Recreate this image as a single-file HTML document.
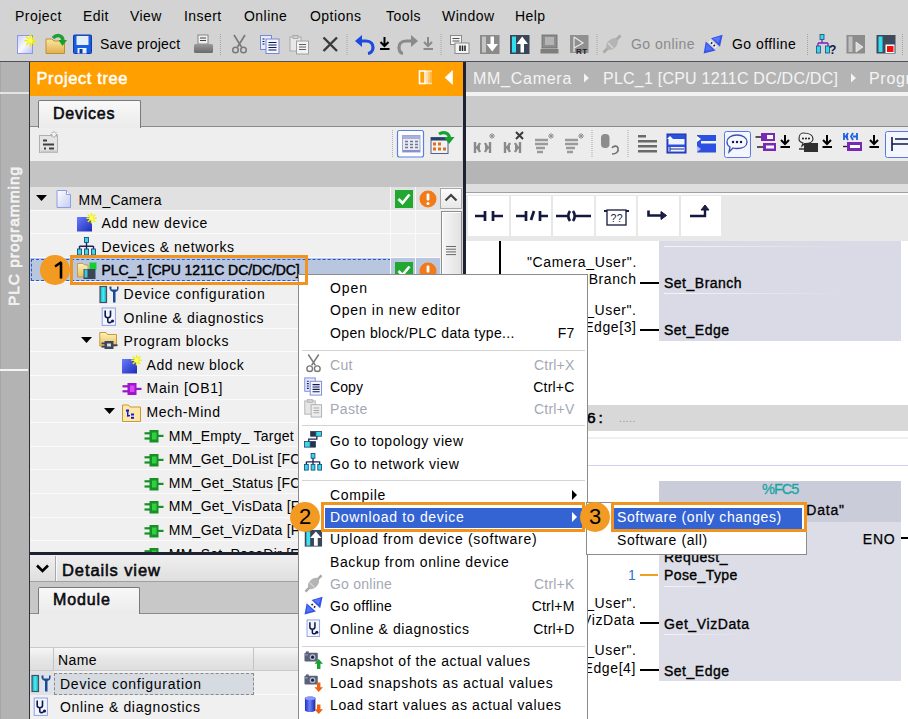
<!DOCTYPE html>
<html><head><meta charset="utf-8">
<style>
*{margin:0;padding:0;box-sizing:border-box}
html,body{width:908px;height:719px;overflow:hidden}
body{position:relative;background:#d3d3d3;font-family:"Liberation Sans",sans-serif;font-size:14px;color:#000;letter-spacing:0.45px}
.a{position:absolute}
.t{position:absolute;white-space:nowrap;line-height:1}
</style></head><body>
<svg width="0" height="0" style="position:absolute">
<defs>
<linearGradient id="gdoc" x1="0" y1="0" x2="1" y2="1"><stop offset="0" stop-color="#ffffff"/><stop offset="1" stop-color="#c4ccf2"/></linearGradient>
<linearGradient id="gblue" x1="0" y1="0" x2="1" y2="1"><stop offset="0" stop-color="#6a7cff"/><stop offset="1" stop-color="#1b2bb8"/></linearGradient>
<linearGradient id="gfold" x1="0" y1="0" x2="0" y2="1"><stop offset="0" stop-color="#fff2b8"/><stop offset="1" stop-color="#e8c060"/></linearGradient>
<linearGradient id="gteal" x1="0" y1="0" x2="1" y2="0"><stop offset="0" stop-color="#20a8b8"/><stop offset="0.5" stop-color="#40f0f8"/><stop offset="1" stop-color="#20a8b8"/></linearGradient>
<symbol id="i-doc" viewBox="0 0 20 20"><path d="M3 1.5H12.5L16.5 5.5V18.5H3Z" fill="url(#gdoc)" stroke="#8e9ce0"/><path d="M12.5 1.5V5.5H16.5" fill="#fff" stroke="#8e9ce0"/></symbol>
<symbol id="i-addnew" viewBox="0 0 20 20"><rect x="0" y="4" width="15" height="14.5" fill="url(#gblue)"/><path d="M14.5 0V10.4M9.3 5.2H19.7M10.8 1.5L18.2 8.9M10.8 8.9L18.2 1.5" stroke="#eef000" stroke-width="1.4"/><circle cx="14.5" cy="5.2" r="2.2" fill="#ffff60"/></symbol>
<symbol id="i-net" viewBox="0 0 20 20"><path d="M9.5 5V9.3M2.5 9.3H16.5M2.5 9V12M9.5 9V12M16.5 9V12" stroke="#20245a" stroke-width="1.4" fill="none"/><g fill="#38d8e8" stroke="#1c4c7c" stroke-width="0.9"><rect x="7.5" y="0.5" width="4" height="5"/><rect x="0.5" y="12" width="4" height="6"/><rect x="7.5" y="12" width="4" height="6"/><rect x="14.5" y="12" width="4" height="6"/></g></symbol>
<symbol id="i-plc" viewBox="0 0 20 20"><path d="M0.5 3.5H6L7.5 5H11V17H0.5Z" fill="url(#gfold)" stroke="#c09030" stroke-width="0.8"/><rect x="12.5" y="2.5" width="7" height="7" fill="#10d030"/><rect x="6.5" y="9" width="12" height="10" fill="#3a4658"/><rect x="7.5" y="9.5" width="3" height="8" fill="#38c8d8"/></symbol>
<symbol id="i-devcfg" viewBox="0 0 20 20"><rect x="1" y="2.5" width="6.5" height="16" fill="url(#gteal)" stroke="#4a5060" stroke-width="1.2"/><path d="M10.5 2.5C10 5.5 11.5 7.5 14 8V18.5H16.5V8C19 7.5 20 5.5 19.5 2.5L18 2.5V5.5H12.5V2.5Z" fill="#1a4a98"/></symbol>
<symbol id="i-diag" viewBox="0 0 20 20"><rect x="3.2" y="1" width="13.2" height="17.4" fill="#f4f6ff" stroke="#8ea0e8" stroke-width="1"/><path d="M6.2 3.5V8.5C6.2 11.5 11.5 11.5 11.5 8.5V3.5M8.8 11V14.2C8.8 16 11 16 12.5 14.8" stroke="#101848" stroke-width="1.6" fill="none"/><circle cx="13.5" cy="14" r="1.6" fill="#101848"/></symbol>
<symbol id="i-progfolder" viewBox="0 0 20 20"><path d="M0.8 1.5H7L8.5 3.5H17.5V15H0.8Z" fill="url(#gfold)" stroke="#c09030" stroke-width="0.9"/><g fill="#3c4656"><rect x="5.5" y="10" width="9" height="8"/><rect x="2.5" y="11.5" width="3.5" height="1.8"/><rect x="2.5" y="14.8" width="3.5" height="1.8"/><rect x="14" y="13.3" width="4.5" height="1.8"/></g><rect x="8" y="12.5" width="4" height="3" fill="#d8dce8"/></symbol>
<symbol id="i-ob" viewBox="0 0 20 20"><g fill="#9a18c8"><rect x="5.5" y="5" width="9" height="12"/><rect x="0.5" y="7.2" width="5.5" height="2.2"/><rect x="0.5" y="12.2" width="5.5" height="2.2"/><rect x="14" y="9.8" width="5.5" height="2.2"/></g><rect x="8" y="7.5" width="4.5" height="6.5" fill="#e040ff"/></symbol>
<symbol id="i-fc" viewBox="0 0 20 20"><g fill="#189028"><rect x="5.5" y="5" width="9" height="12.5"/><rect x="0.5" y="7.2" width="5.5" height="2.2"/><rect x="0.5" y="12.4" width="5.5" height="2.2"/><rect x="14" y="9.8" width="5.5" height="2.2"/></g><rect x="8" y="7.5" width="4.5" height="7" fill="#30d040"/></symbol>
<symbol id="i-mmfolder" viewBox="0 0 20 20"><path d="M0.5 3H6.5L8 5H18.5V19.5H0.5Z" fill="#fde8a8" stroke="#c89838" stroke-width="1"/><g fill="#1018e0"><rect x="4" y="7.5" width="3" height="2.2"/><rect x="5" y="9.5" width="1.4" height="5"/><rect x="5" y="13" width="3" height="1.4"/><rect x="9" y="11.5" width="3" height="2"/><rect x="9" y="14.8" width="3" height="2"/></g></symbol>
</defs></svg>
<svg width="0" height="0" style="position:absolute">
<defs>
<linearGradient id="gcyl" x1="0" y1="0" x2="1" y2="0"><stop offset="0" stop-color="#2030c0"/><stop offset="0.45" stop-color="#6a80ff"/><stop offset="1" stop-color="#1a28a0"/></linearGradient>
<symbol id="m-cut" viewBox="0 0 20 20"><path d="M4.5 0.5L12 12M15.5 0.5L8 12" stroke="#7a7a7a" stroke-width="1.6" fill="none"/><circle cx="6" cy="15.5" r="3" fill="none" stroke="#7a7a7a" stroke-width="1.5"/><circle cx="14" cy="15.5" r="3" fill="none" stroke="#7a7a7a" stroke-width="1.5"/></symbol>
<symbol id="m-copy" viewBox="0 0 20 20"><rect x="0.8" y="1" width="11" height="14" fill="#e8ecff" stroke="#7888d8"/><rect x="6.5" y="4.5" width="12" height="14.5" fill="#f4f6ff" stroke="#7888d8"/><g stroke="#101850" stroke-width="1.2"><path d="M3 4.5H5M3 7H5M3 9.5H5M3 12H5M9 8H16.5M9 10.5H16.5M9 13H16.5M9 15.5H16.5"/></g></symbol>
<symbol id="m-paste" viewBox="0 0 20 20"><rect x="0.8" y="2" width="11" height="14" fill="#e6e6e6" stroke="#b4b4b4"/><rect x="3.5" y="0.5" width="5.5" height="3" fill="#d0d0d0" stroke="#b4b4b4" stroke-width="0.8"/><rect x="7.5" y="6" width="11" height="13" fill="#ececec" stroke="#b0b0b0"/><g stroke="#a8a8a8" stroke-width="1.1"><path d="M10 9.5H16M10 12H16M10 14.5H16"/></g></symbol>
<symbol id="m-topo" viewBox="0 0 20 20"><path d="M7 3.5H13.5V8.5H5V14H7" stroke="#20245a" stroke-width="1.4" fill="none"/><g stroke="#1c3c5c" stroke-width="0.8"><rect x="7" y="0.5" width="5" height="5" fill="#2a3448"/><rect x="12.5" y="0.5" width="6" height="5" fill="#38d8e8"/><rect x="0.5" y="11" width="6" height="6" fill="#38d8e8"/><rect x="7" y="11" width="5" height="6" fill="#2a3448"/></g></symbol>
<symbol id="m-upload" viewBox="0 0 20 20"><rect x="0.8" y="1" width="18.2" height="17.5" fill="#3a4658"/><rect x="2.5" y="2.5" width="4" height="15" fill="#40e0f0"/><path d="M12.5 2.5L18.5 9.5H14.5V17.5H10.5V9.5H6.5Z" fill="#fff"/></symbol>
<symbol id="m-goonline" viewBox="0 0 20 20"><path d="M1.5 18.5L18.5 1.5" stroke="#a8a8a8" stroke-width="2.6"/><ellipse cx="10" cy="10" rx="7" ry="4.6" transform="rotate(-45 10 10)" fill="#b4b4b4"/><path d="M6 9L11 14" stroke="#d8d8d8" stroke-width="1.2"/></symbol>
<symbol id="m-gooffline" viewBox="0 0 20 20"><path d="M8 4.2L19.6 0.8L17 12.8Z" fill="#3454e8"/><path d="M10 4.5L17.5 2.5L15.5 9Z" fill="#6a84ff" opacity="0.7"/><path d="M2.8 7.6L12.6 16.4L0.6 19.4Z" fill="#3454e8"/><path d="M3.5 10L9.5 15.5L2.5 17Z" fill="#6a84ff" opacity="0.6"/><path d="M6.6 7.2L13 13.2" stroke="#f4f4f4" stroke-width="2.6"/><path d="M8 8.5L9.2 9.6M10.6 11L11.8 12.1" stroke="#1a1e48" stroke-width="1.8"/></symbol>
<symbol id="m-snap" viewBox="0 0 20 20"><rect x="0.5" y="3" width="14" height="9" rx="1" fill="#5a6278"/><rect x="2" y="1.5" width="3" height="2" fill="#5a6278"/><rect x="1" y="4.5" width="3" height="1.2" fill="#9aa0b8"/><circle cx="9" cy="7.5" r="3" fill="#b8bcd0"/><circle cx="9" cy="7.5" r="1.6" fill="#1a1e40"/><path d="M15.5 9.5L20 14.5H17.3V20H13.7V14.5H11Z" fill="#18a030"/></symbol>
<symbol id="m-loadsnap" viewBox="0 0 20 20"><rect x="0.5" y="3" width="14" height="9" rx="1" fill="#5a6278"/><rect x="2" y="1.5" width="3" height="2" fill="#5a6278"/><rect x="1" y="4.5" width="3" height="1.2" fill="#9aa0b8"/><circle cx="9" cy="7.5" r="3" fill="#b8bcd0"/><circle cx="9" cy="7.5" r="1.6" fill="#1a1e40"/><path d="M13.7 10H17.3V15H20L15.5 20L11 15H13.7Z" fill="#f06010"/></symbol>
<symbol id="m-loadstart" viewBox="0 0 20 20"><path d="M1 3.5C1 1 12 1 12 3.5V16C12 18.5 1 18.5 1 16Z" fill="url(#gcyl)"/><ellipse cx="6.5" cy="3.5" rx="5.5" ry="2" fill="#8898ff"/><path d="M13.7 10H17.3V15H20L15.5 20L11 15H13.7Z" fill="#f06010"/></symbol>
</defs></svg>

<!-- menu bar -->
<div class="t" style="left:15px;top:9px">Project</div>
<div class="t" style="left:83px;top:9px">Edit</div>
<div class="t" style="left:130px;top:9px">View</div>
<div class="t" style="left:184px;top:9px">Insert</div>
<div class="t" style="left:244px;top:9px">Online</div>
<div class="t" style="left:310px;top:9px">Options</div>
<div class="t" style="left:386px;top:9px">Tools</div>
<div class="t" style="left:442px;top:9px">Window</div>
<div class="t" style="left:515px;top:9px">Help</div>

<!-- toolbar -->
<svg class="a" style="left:0;top:28px" width="908" height="32">
<defs>
<linearGradient id="tgdoc" x1="0" y1="0" x2="1" y2="1"><stop offset="0" stop-color="#c8d0f8"/><stop offset="0.5" stop-color="#f8f8ff"/><stop offset="1" stop-color="#b8c0f0"/></linearGradient>
<linearGradient id="tgfold" x1="0" y1="0" x2="0" y2="1"><stop offset="0" stop-color="#fce8a0"/><stop offset="1" stop-color="#e0b050"/></linearGradient>
<linearGradient id="tggrey" x1="0" y1="0" x2="0" y2="1"><stop offset="0" stop-color="#9a9a9a"/><stop offset="1" stop-color="#6a6a6a"/></linearGradient>
</defs>
<!-- new project -->
<rect x="17.5" y="7.5" width="15" height="18" fill="url(#tgdoc)" stroke="#8c98e0"/>
<path d="M30.4 6.5V19M24.2 12.7H36.6M26 8.5L34.8 17M26 17L34.8 8.5" stroke="#f0f000" stroke-width="1.5"/><circle cx="30.4" cy="12.7" r="2.3" fill="#ffff50"/>
<!-- open -->
<path d="M46 11H52L54 13H64.5V25.5H46Z" fill="url(#tgfold)" stroke="#c09030"/>
<path d="M53 10C57 6 62 7 63 12" stroke="#20a030" stroke-width="3.5" fill="none"/><path d="M58.5 12H67L62.5 18Z" fill="#18a028"/>
<!-- save -->
<rect x="73.5" y="7" width="18" height="18.5" rx="1" fill="#1a5ce0" stroke="#0c3ca8"/>
<rect x="76.5" y="8" width="12" height="9" fill="#e4eef8"/><rect x="77.5" y="20" width="9" height="5.5" fill="#e8f0ff"/><rect x="79.5" y="21" width="3" height="4.5" fill="#0c3ca8"/>
<!-- print -->
<rect x="198" y="7" width="10" height="9" fill="#f0f0f0" stroke="#707070" stroke-width="0.8"/>
<path d="M200 10H206M200 12.5H206" stroke="#404040"/>
<rect x="194" y="16" width="19" height="9" rx="1.5" fill="url(#tggrey)"/>
<path d="M220.5 6V28" stroke="#a4a4a4" stroke-dasharray="1 1"/>
<!-- cut -->
<path d="M234 7L241.5 19M245 7L237.5 19" stroke="#7a7a7a" stroke-width="1.7" fill="none"/>
<circle cx="235.5" cy="22" r="2.8" fill="none" stroke="#7a7a7a" stroke-width="1.5"/><circle cx="243.5" cy="22" r="2.8" fill="none" stroke="#7a7a7a" stroke-width="1.5"/>
<!-- copy -->
<rect x="260.5" y="7.5" width="11" height="14" fill="#e8ecff" stroke="#7888d8"/><rect x="266" y="11" width="13" height="14.5" fill="#f4f6ff" stroke="#7888d8"/>
<path d="M262.5 11H264.5M262.5 13.5H264.5M262.5 16H264.5M268.5 14.5H276.5M268.5 17H276.5M268.5 19.5H276.5M268.5 22H276.5" stroke="#101850" stroke-width="1.2"/>
<!-- paste -->
<rect x="290" y="9" width="11" height="14" fill="#e8e8e8" stroke="#a8a8a8"/><rect x="293" y="7.5" width="5" height="3" fill="#d0d0d0" stroke="#a0a0a0" stroke-width="0.8"/>
<rect x="296.5" y="13" width="12" height="13" fill="#f2f2f2" stroke="#a0a0a0"/><path d="M299 16.5H306M299 19H306M299 21.5H306" stroke="#606060" stroke-width="1.1"/>
<!-- delete X -->
<path d="M323.5 9.5L337 23M337 9.5L323.5 23" stroke="#3a3a3a" stroke-width="2.4"/>
<path d="M347 6V28" stroke="#a4a4a4" stroke-dasharray="1 1"/>
<!-- undo -->
<path d="M357 13H366C371 13 373 16.5 373 19.5C373 22.5 371 25 368 25.5" stroke="#1c4ae0" stroke-width="3.2" fill="none"/>
<path d="M355 13L362 7V19Z" fill="#1c4ae0"/>
<path d="M384.5 9V17M380.5 14L384.5 18L388.5 14" stroke="#000" stroke-width="2" fill="none"/><rect x="380" y="20" width="9.5" height="2" fill="#000"/>
<!-- redo -->
<path d="M415 13H406C401 13 399 16.5 399 19.5C399 22.5 400.5 25 403 25.5" stroke="#8a8a8a" stroke-width="3.2" fill="none"/>
<path d="M418 13L411 7V19Z" fill="#8a8a8a"/>
<path d="M428 9V17M424 14L428 18L432 14" stroke="#8a8a8a" stroke-width="2" fill="none"/><rect x="423.5" y="20" width="9.5" height="2" fill="#8a8a8a"/>
<path d="M441 6V28" stroke="#a4a4a4" stroke-dasharray="1 1"/>
<!-- compile -->
<rect x="450.5" y="7.5" width="11" height="9" fill="#f4f4f4" stroke="#808080" stroke-width="0.9"/><path d="M452.5 10.5H459.5M452.5 13H459.5" stroke="#505050"/>
<rect x="455" y="15" width="14" height="10.5" fill="#f4f4f4" stroke="#808080" stroke-width="0.9"/><path d="M460 17.5V23M462.5 17.5V23M465 17.5V23" stroke="#202020" stroke-width="1.5"/>
<!-- download grey -->
<rect x="480" y="7" width="19.5" height="19" fill="#8a8a8a"/><rect x="482" y="8.5" width="4" height="16" fill="#c4c4c4"/><path d="M490.5 8.5H494V16H498L492.2 23.5L486.5 16H490.5Z" fill="#fff"/>
<!-- upload teal -->
<rect x="510" y="7" width="19.5" height="19" fill="#3a4658"/><rect x="512" y="8.5" width="4" height="16" fill="#30e0f0"/><path d="M520.5 24.5H524V16H528L522.2 8.5L516.5 16H520.5Z" fill="#fff"/>
<!-- monitor grey -->
<rect x="542" y="7" width="15" height="13" fill="#8e8e8e" stroke="#6a6a6a" stroke-width="0.8"/><rect x="545" y="9" width="9" height="8" fill="#b4b4b4"/><rect x="540.5" y="21" width="18" height="4.5" fill="#7e7e7e"/>
<!-- start sim grey -->
<rect x="570" y="7" width="18.5" height="18" fill="#909090"/><path d="M574 9V24M574 9L583 15L574 20" stroke="#e8e8e8" stroke-width="1.2" fill="none"/><text x="576" y="26" font-family="Liberation Sans" font-weight="bold" font-size="8" fill="#202020">RT</text>
<path d="M597 6V28" stroke="#a4a4a4" stroke-dasharray="1 1"/>
<!-- go online grey plug -->
<svg x="602" y="6" width="20" height="20" viewBox="0 0 20 20"><use href="#m-goonline"/></svg>
<!-- go offline blue -->
<svg x="703" y="6" width="20" height="20" viewBox="0 0 20 20"><use href="#m-gooffline"/></svg>
<path d="M807.5 6V28" stroke="#a4a4a4" stroke-dasharray="1 1"/>
<!-- accessible devices -->
<path d="M822 11V15M818 15H828M818 15V18M828 15V18" stroke="#8020c0" stroke-width="1.3" fill="none"/>
<rect x="820" y="6.5" width="4" height="5" fill="#38d8e8" stroke="#1c4c7c" stroke-width="0.8"/><rect x="816.5" y="18" width="4" height="7" fill="#38d8e8" stroke="#1c4c7c" stroke-width="0.8"/><rect x="825.5" y="18" width="4" height="7" fill="#38d8e8" stroke="#1c4c7c" stroke-width="0.8"/>
<text x="829" y="25.5" font-family="Liberation Sans" font-weight="bold" font-size="12" fill="#101848">?</text>
<!-- grey sim -->
<rect x="846.5" y="7" width="18.5" height="18.5" fill="#8c8c8c"/><rect x="848.5" y="8.5" width="4" height="15.5" fill="#c0c0c0"/><path d="M856 14V24L863 19Z" fill="#d8d8d8" stroke="#f0f0f0" stroke-width="0.8"/>
<!-- stop sim -->
<rect x="876.5" y="7" width="19" height="18.5" fill="#3e4a5c"/><rect x="878.5" y="8.5" width="4" height="15.5" fill="#30e0f0"/><rect x="885.5" y="16.5" width="9" height="8.5" fill="#fff"/><rect x="887" y="18" width="6.5" height="6" fill="#f01010"/>
<path d="M902.5 6V28" stroke="#a4a4a4" stroke-dasharray="1 1"/>
</svg>

<div class="t" style="left:100px;top:37px;letter-spacing:0.2px">Save project</div>
<div class="t" style="left:631px;top:37px;color:#8a8a8a">Go online</div>
<div class="t" style="left:732px;top:37px">Go offline</div>

<div class="a" style="left:0;top:61px;width:908px;height:1px;background:#50505a"></div>

<!-- left sidebar -->
<div class="a" style="left:0;top:62px;width:29px;height:657px;background:#b3b3b3;border-left:1px solid #a6a6a6"></div>
<div class="a" style="left:0;top:369px;width:28px;height:1.5px;background:#f4f4f4"></div>
<div class="a" style="left:0;top:92px;width:29px;height:2px;background:#e4e4e4"></div>
<div class="a" style="left:29px;top:62px;width:1px;height:657px;background:#2e3038"></div>

<!-- project tree -->
<div class="a" style="left:30px;top:62px;width:433px;height:34px;background:#ff9f00"></div>
<div class="t" style="left:36.5px;top:69.8px;color:#fff;font-size:16.5px;letter-spacing:0.6px;-webkit-text-stroke:0.5px #fff">Project tree</div>
<div class="a" style="left:30px;top:96px;width:433px;height:30px;background:#cacaca"></div>
<div class="a" style="left:30px;top:126px;width:432px;height:35px;background:#eeeeee;border-top:1px solid #8a8a8a"></div>
<div class="a" style="left:38px;top:100px;width:103px;height:28px;background:linear-gradient(#f8f8f8,#ebebeb);border:1px solid #7a7a7a;border-bottom:none;border-radius:2px 2px 0 0"></div>
<div class="t" style="left:53px;top:106px;font-size:16px;letter-spacing:0.75px;-webkit-text-stroke:0.55px #000;color:#10101a">Devices</div>
<div class="a" style="left:30px;top:161px;width:433px;height:26px;background:#c4c4c4"></div>
<div class="a" style="left:30px;top:187px;width:411px;height:365px;background:#f0f0f0"></div>
<div class="a" style="left:30px;top:187.3px;width:411px;height:23.6px;background:#e1e1e1;border-bottom:1px solid #fbfbfb"></div>
<svg class="a" style="left:35.6px;top:195.3px" width="11" height="6"><path d="M0 0H11L5.5 6Z" fill="#000"/></svg>
<svg class="a" style="left:53.6px;top:189.3px" width="20" height="20"><use href="#i-doc"/></svg>
<div class="t" style="left:78.6px;top:192.5px;letter-spacing:0.24px">MM_Camera</div>
<div class="a" style="left:30px;top:210.9px;width:411px;height:23.6px;background:#f0f0f0;border-bottom:1px solid #fbfbfb"></div>
<svg class="a" style="left:76.5px;top:212.9px" width="20" height="20"><use href="#i-addnew"/></svg>
<div class="t" style="left:101.5px;top:216.1px;letter-spacing:0.53px">Add new device</div>
<div class="a" style="left:30px;top:234.5px;width:411px;height:23.6px;background:#f0f0f0;border-bottom:1px solid #fbfbfb"></div>
<svg class="a" style="left:76.5px;top:236.5px" width="20" height="20"><use href="#i-net"/></svg>
<div class="t" style="left:101.5px;top:239.7px;letter-spacing:0.56px">Devices &amp; networks</div>
<div class="a" style="left:30px;top:258.1px;width:411px;height:23.6px;background:#b9c6e0;border-bottom:1px solid #fbfbfb"></div>
<svg class="a" style="left:76.5px;top:260.1px" width="20" height="20"><use href="#i-plc"/></svg>
<div class="t" style="left:101.5px;top:263.3px;letter-spacing:-0.09px;-webkit-text-stroke:0.45px #000">PLC_1 [CPU 1211C DC/DC/DC]</div>
<div class="a" style="left:30px;top:281.7px;width:411px;height:23.6px;background:#f0f0f0;border-bottom:1px solid #fbfbfb"></div>
<svg class="a" style="left:98.6px;top:283.7px" width="20" height="20"><use href="#i-devcfg"/></svg>
<div class="t" style="left:123.6px;top:286.9px;letter-spacing:0.75px">Device configuration</div>
<div class="a" style="left:30px;top:305.3px;width:411px;height:23.6px;background:#f0f0f0;border-bottom:1px solid #fbfbfb"></div>
<svg class="a" style="left:98.6px;top:307.3px" width="20" height="20"><use href="#i-diag"/></svg>
<div class="t" style="left:123.6px;top:310.5px;letter-spacing:0.65px">Online &amp; diagnostics</div>
<div class="a" style="left:30px;top:328.9px;width:411px;height:23.6px;background:#f0f0f0;border-bottom:1px solid #fbfbfb"></div>
<svg class="a" style="left:80.6px;top:336.9px" width="11" height="6"><path d="M0 0H11L5.5 6Z" fill="#000"/></svg>
<svg class="a" style="left:98.6px;top:330.9px" width="20" height="20"><use href="#i-progfolder"/></svg>
<div class="t" style="left:123.6px;top:334.1px;letter-spacing:0.58px">Program blocks</div>
<div class="a" style="left:30px;top:352.5px;width:411px;height:23.6px;background:#f0f0f0;border-bottom:1px solid #fbfbfb"></div>
<svg class="a" style="left:121.6px;top:354.5px" width="20" height="20"><use href="#i-addnew"/></svg>
<div class="t" style="left:146.6px;top:357.7px;letter-spacing:0.5px">Add new block</div>
<div class="a" style="left:30px;top:376.1px;width:411px;height:23.6px;background:#f0f0f0;border-bottom:1px solid #fbfbfb"></div>
<svg class="a" style="left:121.6px;top:378.1px" width="20" height="20"><use href="#i-ob"/></svg>
<div class="t" style="left:146.6px;top:381.3px;letter-spacing:0.65px">Main [OB1]</div>
<div class="a" style="left:30px;top:399.7px;width:411px;height:23.6px;background:#f0f0f0;border-bottom:1px solid #fbfbfb"></div>
<svg class="a" style="left:103.6px;top:407.7px" width="11" height="6"><path d="M0 0H11L5.5 6Z" fill="#000"/></svg>
<svg class="a" style="left:121.6px;top:401.7px" width="20" height="20"><use href="#i-mmfolder"/></svg>
<div class="t" style="left:146.6px;top:404.9px;letter-spacing:0.51px">Mech-Mind</div>
<div class="a" style="left:30px;top:423.3px;width:411px;height:23.6px;background:#f0f0f0;border-bottom:1px solid #fbfbfb"></div>
<svg class="a" style="left:143.8px;top:425.3px" width="20" height="20"><use href="#i-fc"/></svg>
<div class="t" style="left:168.8px;top:428.5px;letter-spacing:0.25px">MM_Empty_ Target [FC1]</div>
<div class="a" style="left:30px;top:446.9px;width:411px;height:23.6px;background:#f0f0f0;border-bottom:1px solid #fbfbfb"></div>
<svg class="a" style="left:143.8px;top:448.9px" width="20" height="20"><use href="#i-fc"/></svg>
<div class="t" style="left:168.8px;top:452.1px;letter-spacing:0.25px">MM_Get_DoList [FC2]</div>
<div class="a" style="left:30px;top:470.5px;width:411px;height:23.6px;background:#f0f0f0;border-bottom:1px solid #fbfbfb"></div>
<svg class="a" style="left:143.8px;top:472.5px" width="20" height="20"><use href="#i-fc"/></svg>
<div class="t" style="left:168.8px;top:475.7px;letter-spacing:0.25px">MM_Get_Status [FC3]</div>
<div class="a" style="left:30px;top:494.1px;width:411px;height:23.6px;background:#f0f0f0;border-bottom:1px solid #fbfbfb"></div>
<svg class="a" style="left:143.8px;top:496.1px" width="20" height="20"><use href="#i-fc"/></svg>
<div class="t" style="left:168.8px;top:499.3px;letter-spacing:0.25px">MM_Get_VisData [FC4]</div>
<div class="a" style="left:30px;top:517.7px;width:411px;height:23.6px;background:#f0f0f0;border-bottom:1px solid #fbfbfb"></div>
<svg class="a" style="left:143.8px;top:519.7px" width="20" height="20"><use href="#i-fc"/></svg>
<div class="t" style="left:168.8px;top:522.9px;letter-spacing:0.25px">MM_Get_VizData [FC5]</div>
<div class="a" style="left:30px;top:541.3px;width:411px;height:23.6px;background:#f0f0f0;border-bottom:1px solid #fbfbfb"></div>
<svg class="a" style="left:143.8px;top:543.3px" width="20" height="20"><use href="#i-fc"/></svg>
<div class="t" style="left:168.8px;top:546.5px;letter-spacing:0.25px">MM_Set_PoseDir [FC6]</div>

<!-- PLC row dotted focus border -->
<div class="a" style="left:31px;top:258.5px;width:360px;height:22.5px;border:1px dashed #2858d8"></div>
<!-- tree right columns (visible part) -->
<div class="a" style="left:390px;top:187px;width:1px;height:87px;background:#fafafa"></div>
<div class="a" style="left:415px;top:187px;width:1px;height:87px;background:#fafafa"></div>
<svg class="a" style="left:395px;top:190px" width="18" height="18"><rect x="0" y="0" width="18" height="18" fill="#22a830"/><path d="M3.5 9L7.5 13L14.5 4.5" stroke="#fff" stroke-width="2.6" fill="none"/></svg>
<svg class="a" style="left:419px;top:190px" width="18" height="18"><circle cx="9" cy="9" r="8.5" fill="#f27a18"/><rect x="7.6" y="3.5" width="2.8" height="7" rx="1" fill="#fff"/><circle cx="9" cy="13.5" r="1.5" fill="#fff"/></svg>
<svg class="a" style="left:395px;top:262px" width="18" height="12"><rect x="0" y="0" width="18" height="18" fill="#22a830"/><path d="M3.5 9L7.5 13L14.5 4.5" stroke="#fff" stroke-width="2.6" fill="none"/></svg>
<svg class="a" style="left:419px;top:262px" width="18" height="12"><circle cx="9" cy="9" r="8.5" fill="#f27a18"/><rect x="7.6" y="3.5" width="2.8" height="7" rx="1" fill="#fff"/></svg>
<!-- scrollbar -->
<div class="a" style="left:440px;top:187px;width:22px;height:365px;background:#f0f0f0"></div>
<div class="a" style="left:440px;top:187.5px;width:21.5px;height:21.5px;background:linear-gradient(#fcfcfc,#e8e8e8);border:1px solid #a8a8a8"></div>
<svg class="a" style="left:444px;top:193px" width="14" height="9"><path d="M1.5 7.5L7 2L12.5 7.5" stroke="#404040" stroke-width="2.2" fill="none"/></svg>
<div class="a" style="left:440.5px;top:211px;width:21.5px;height:341px;background:linear-gradient(90deg,#f6f6f6,#e2e2e2);border:1px solid #8e8e8e;box-shadow:inset 1px 1px 0 #fff"></div>
<div class="a" style="left:446px;top:246px;width:10px;height:1.2px;background:#6a6a6a;box-shadow:0 2.7px #6a6a6a,0 5.4px #6a6a6a,0 8.1px #6a6a6a"></div>



<!-- dark divider -->
<div class="a" style="left:463px;top:62px;width:3px;height:657px;background:#1c2234"></div>

<!-- editor -->
<div class="a" style="left:466px;top:62px;width:442px;height:30px;background:#b4b4b4"></div>

<div class="a" style="left:466px;top:92px;width:442px;height:4px;background:#f2f2f2"></div>
<div class="a" style="left:466px;top:96px;width:442px;height:30px;background:#cacaca"></div>
<div class="a" style="left:466px;top:126px;width:442px;height:35px;background:#ececec;border-top:1px solid #8a8a8a"></div>
<div class="a" style="left:466px;top:161px;width:442px;height:23px;background:#b5b5b5"></div>
<div class="a" style="left:466px;top:184px;width:442px;height:8px;background:#dedede"></div>
<div class="a" style="left:466px;top:192px;width:442px;height:49px;background:#f6f6f6"></div>
<div class="a" style="left:466px;top:241px;width:442px;height:478px;background:#ffffff"></div>
<!-- LAD instruction bar -->
<div class="a" style="left:466px;top:192px;width:442px;height:1px;background:#a0a0a0"></div>
<div class="a" style="left:466px;top:193px;width:442px;height:2px;background:#fafafa"></div>
<div class="a" style="left:466px;top:195px;width:442px;height:46px;background:#e8e8e8"></div>
<div class="a" style="left:468px;top:196px;width:41px;height:40px;background:#fff;"></div>
<div class="a" style="left:511px;top:196px;width:40px;height:40px;background:#fff;"></div>
<div class="a" style="left:553px;top:196px;width:41px;height:40px;background:#fff;"></div>
<div class="a" style="left:596px;top:196px;width:40px;height:40px;background:#fff;"></div>
<div class="a" style="left:638px;top:196px;width:41px;height:40px;background:#fff;"></div>
<div class="a" style="left:681px;top:196px;width:40px;height:40px;background:#fff;"></div>
<svg class="a" style="left:466px;top:196px" width="260" height="40">
<g stroke="#14183c" stroke-width="2.7" fill="none">
<path d="M9 20H18M19 15V25M27 15V25M27 20H37"/>
<path d="M50 20H59M60 15V25M74 15V25M74 20H82M65 24L68 15"/>
<path d="M90 20H101M104 15Q100.5 20 104 25M107 15Q110.5 20 107 25M110 20H125"/>
<rect x="141" y="14" width="19" height="15" stroke-width="1.3"/>
<path d="M182.5 14.5V19.5H196" stroke-width="2.6"/><path d="M195 15.5L200.5 19.5L195 23.5Z" fill="#1a1e48" stroke-width="1"/>
<path d="M224 20H239V13" stroke-width="2.4"/><path d="M235 14L239 9L243 14Z" fill="#1a1e48" stroke-width="1"/>
</g>
<path d="M138 15H141M160 15H163" stroke="#1a1e48" stroke-width="2"/>
<text x="144.5" y="25.5" font-family="Liberation Sans" font-size="10.5" fill="#1a1e48">??</text>
</svg>

<!-- network 1 -->
<div class="a" style="left:499px;top:241px;width:2px;height:33px;background:#000"></div>
<div class="a" style="left:659px;top:241px;width:242px;height:100px;background:#d9dae6"></div>
<div class="a" style="left:664px;top:246px;width:180px;height:1px;background:linear-gradient(90deg,#f4f4f8,#d9dae6)"></div>
<div class="a" style="left:664px;top:293px;width:180px;height:1px;background:linear-gradient(90deg,#f4f4f8,#d9dae6)"></div>
<div class="t" style="left:527px;top:255px;letter-spacing:0.64px">"Camera_User".</div>
<div class="t" style="right:271.4px;top:272.3px;letter-spacing:0.6px">Branch</div>
<div class="a" style="left:640px;top:282px;width:19px;height:2px;background:#000"></div>
<div class="t" style="left:664px;top:276px;letter-spacing:0.5px;-webkit-text-stroke:0.35px #000">Set_Branch</div>
<div class="t" style="right:271.4px;top:302.8px;letter-spacing:0.6px">_User".</div>
<div class="t" style="right:271.4px;top:320px;letter-spacing:0.6px">Edge[3]</div>
<div class="a" style="left:640px;top:329px;width:19px;height:2px;background:#000"></div>
<div class="t" style="left:664px;top:322.5px;letter-spacing:0.5px;-webkit-text-stroke:0.35px #000">Set_Edge</div>

<!-- network 6 header -->
<div class="a" style="left:588px;top:405px;width:320px;height:26px;background:#d8d8d8"></div>
<div class="t" style="left:587px;top:410px;font-size:15.5px;letter-spacing:3px;-webkit-text-stroke:0.6px #000">6:</div>
<div class="t" style="left:619px;top:414px;font-size:10px;color:#909090;letter-spacing:0.6px">.....</div>
<div class="a" style="left:588px;top:437px;width:320px;height:2px;background:#f0f0f0"></div>
<div class="a" style="left:588px;top:465px;width:320px;height:1px;background:#cfcff0"></div>
<div class="a" style="left:587px;top:466px;width:1px;height:253px;background:#8a8a8a"></div>

<!-- FC5 block -->
<div class="a" style="left:659px;top:480.5px;width:242px;height:200.5px;background:#dcdde7"></div>
<div class="a" style="left:659px;top:480.5px;width:242px;height:41.5px;background:#cbccda"></div>
<div class="t" style="left:762px;top:481.5px;color:#18a4a4;font-size:14.5px;letter-spacing:-1px;-webkit-text-stroke:0.3px #18a4a4">%FC5</div>
<div class="t" style="right:63.2px;top:503px;letter-spacing:0.8px;-webkit-text-stroke:0.3px #000">"MM_Get_VizData"</div>
<div class="t" style="right:12.5px;top:531.5px;letter-spacing:0.8px;-webkit-text-stroke:0.25px #000">ENO</div>
<div class="a" style="left:901px;top:536.5px;width:7px;height:2px;background:#000"></div>
<div class="t" style="left:664px;top:550px;letter-spacing:0.5px;-webkit-text-stroke:0.35px #000">Request_</div>

<div class="t" style="left:628px;top:568px;color:#3070d0;letter-spacing:0">1</div>
<div class="a" style="left:640px;top:574px;width:18px;height:2px;background:#f0a020"></div>
<div class="t" style="left:664px;top:568px;letter-spacing:0.4px;-webkit-text-stroke:0.35px #000">Pose_Type</div>
<div class="a" style="left:664px;top:586px;width:80px;height:1px;background:linear-gradient(90deg,#f4f4f8,#d9dae6)"></div>
<div class="t" style="right:271.4px;top:595.8px;letter-spacing:0.6px">_User".</div>
<div class="t" style="right:273px;top:613px;letter-spacing:0.6px">VizData</div>
<div class="a" style="left:640px;top:622px;width:19px;height:2px;background:#000"></div>
<div class="t" style="left:664px;top:617px;letter-spacing:0.6px;-webkit-text-stroke:0.35px #000">Get_VizData</div>
<div class="a" style="left:664px;top:634px;width:90px;height:1px;background:linear-gradient(90deg,#f4f4f8,#d9dae6)"></div>
<div class="t" style="right:271.4px;top:643px;letter-spacing:0.6px">_User".</div>
<div class="t" style="right:272px;top:661.2px;letter-spacing:0.6px">Edge[4]</div>
<div class="a" style="left:640px;top:669px;width:19px;height:2px;background:#000"></div>
<div class="t" style="left:664px;top:664px;letter-spacing:0.5px;-webkit-text-stroke:0.35px #000">Set_Edge</div>


<!-- project tree header icons -->
<svg class="a" style="left:415px;top:66px" width="42" height="24">
<rect x="4.5" y="5" width="5.5" height="12.5" fill="none" stroke="#fff" stroke-width="1.6"/>
<path d="M12 5V17.5" stroke="#fff" stroke-width="1.4" opacity="0.95"/><path d="M14 5V17.5" stroke="#fff" stroke-width="1.2" opacity="0.75"/><path d="M16 5V17.5" stroke="#fff" stroke-width="1" opacity="0.5"/><path d="M10 5H17M10 17.5H17" stroke="#fff" stroke-width="1.4" opacity="0.6"/>
<path d="M37.8 4V19L29.7 11.5Z" fill="#fff"/>
</svg>
<!-- sidebar vertical text -->
<div class="t" style="left:15px;top:306px;transform-origin:0 0;transform:rotate(-90deg);color:#f2f2f2;font-size:15.5px;letter-spacing:0.95px;-webkit-text-stroke:0.75px #f2f2f2;margin-left:-9px">PLC programming</div>
<!-- breadcrumb -->
<div class="t" style="left:473px;top:71px;color:#f4f4f4;font-size:16px;letter-spacing:0.73px">MM_Camera</div>
<svg class="a" style="left:583px;top:73px" width="8" height="10"><path d="M1 0.5L6 5L1 9.5Z" fill="#f4f4f4"/></svg>
<div class="t" style="left:603px;top:71px;color:#f4f4f4;font-size:16px;letter-spacing:0.23px">PLC_1 [CPU 1211C DC/DC/DC]</div>
<svg class="a" style="left:850px;top:73px" width="8" height="10"><path d="M1 0.5L6 5L1 9.5Z" fill="#f4f4f4"/></svg>
<div class="t" style="left:869px;top:71px;color:#f4f4f4;font-size:16px;letter-spacing:0.7px">Program blocks</div>
<!-- tree toolbar icons -->
<svg class="a" style="left:30px;top:127px" width="432" height="34">
<rect x="9.5" y="8.5" width="18" height="17" fill="#e4e4e4" stroke="#b0b0b0"/><rect x="10.5" y="23.5" width="17" height="2" fill="#c8c8c8"/>
<path d="M13 13.5H17M13 17.5H24M14 21.5H16M19 21.5H24" stroke="#404040" stroke-width="2"/>
<path d="M24 4V11M20.5 7.5H27.5M21.5 5L26.5 10M21.5 10L26.5 5" stroke="#a8a8a8" stroke-width="1"/><circle cx="24" cy="7.5" r="1.8" fill="#f4f4f4"/>
<path d="M362.5 3V31" stroke="#b0b0b0" stroke-dasharray="1 1"/>
<rect x="367.5" y="3.5" width="26" height="26.5" rx="2" fill="#fdfdff" stroke="#5a80e0" stroke-width="1.2"/>
<rect x="372.5" y="8.5" width="17.5" height="16.5" fill="#e8eaf4" stroke="#a0a8d0"/>
<rect x="373" y="9" width="17" height="3" fill="#a8b0e0"/><rect x="373" y="23" width="17" height="2" fill="#8890d0"/>
<path d="M375 14.5H378M380 14.5H383M385 14.5H388M375 17.5H378M380 17.5H383M385 17.5H388M375 20.5H378M380 20.5H383M385 20.5H388" stroke="#707888" stroke-width="1.3"/>
<rect x="401" y="10.5" width="17" height="16" fill="#f0f2f8" stroke="#506088"/>
<rect x="401" y="10.5" width="17" height="3" fill="#2a4068"/>
<g fill="#e07010"><rect x="403" y="15.5" width="3" height="3"/><rect x="408" y="15.5" width="3" height="3"/><rect x="403" y="20.5" width="3" height="3"/><rect x="408" y="20.5" width="3" height="3"/><rect x="413" y="20.5" width="3" height="3"/></g>
<path d="M409 7C414 4 419 6 419.5 11" stroke="#18a030" stroke-width="3.2" fill="none"/><path d="M414 10H424.5L419 17Z" fill="#18a030"/>
</svg>
<!-- editor toolbar icons -->
<svg class="a" style="left:466px;top:127px" width="442" height="34">
<g fill="#8a8a8a">
<path d="M9 15V26M9 20.5H14M14 16L11.5 20.5L14 25M19 16L21.5 20.5L19 25M24 15V26M19 20.5H24" stroke="#8a8a8a" stroke-width="2.4" fill="none"/>
<path d="M26 6V12M23 9H29M24 7L28 11M24 11L28 7" stroke="#909090" stroke-width="1" />
<path d="M39 15V26M39 20.5H44M44 16L41.5 20.5L44 25M49 16L51.5 20.5L49 25M54 15V26M49 20.5H54" stroke="#8a8a8a" stroke-width="2.4" fill="none"/>
<path d="M50 5L57 12M57 5L50 12" stroke="#3a3a3a" stroke-width="2"/>
<path d="M69 13H82M69 17H82M70 21H79M71 25H77" stroke="#9a9a9a" stroke-width="2.4"/>
<path d="M85 6V12M82 9H88M83 7L87 11M83 11L87 7" stroke="#909090" stroke-width="1"/>
<path d="M99 13H112M99 17H112M100 21H109M101 25H107" stroke="#9a9a9a" stroke-width="2.4"/>
<path d="M115 6V12M112 9H118M113 7L117 11M113 11L117 7" stroke="#909090" stroke-width="1"/>
</g>
<path d="M126 3V31M162 3V31" stroke="#a8a8a8" stroke-dasharray="1 1"/>
<rect x="135" y="7" width="8.5" height="14" rx="4" fill="#8c8c8c"/>
<path d="M146 27C150 27 153 25 152 21C151 18 147 19 146 21" stroke="#707070" stroke-width="1.6" fill="none"/>
<path d="M172 8H180V10.5H172ZM172 13H191V15.5H172ZM172 18H191V20.5H172ZM172 23H191V25.5H172Z" fill="#6a6a6a"/>
<rect x="201" y="7" width="19" height="19" fill="#2c50e0" stroke="#1a30a0"/><rect x="202.5" y="12" width="16" height="5.5" fill="#f0f4ff"/><rect x="202.5" y="20" width="16" height="4.5" fill="#f0f4ff"/><path d="M204 9L207 12H201Z" fill="#fff"/><path d="M204 20V24.5M204 22H218" stroke="#1a2a80" stroke-width="1"/>
<rect x="231" y="8" width="19" height="17.5" fill="#2c50e0"/><rect x="235" y="14" width="15" height="2.5" fill="#f0f4ff"/><path d="M231 9V15L235 12Z" fill="#fff"/><path d="M231 19V25L235 22Z" fill="#aab8ff"/>
<rect x="258.5" y="4.5" width="26" height="26" rx="2" fill="#f4f6ff" stroke="#5a78e0"/>
<path d="M271 8C277 8 281 11 281 15C281 19 277 21.5 271 21.5C269.5 21.5 268 21.3 267 21L263 25L264 20C262 19 261 17 261 15C261 11 265 8 271 8Z" fill="#f8f8ff" stroke="#3a50b0" stroke-width="1.3"/>
<circle cx="267" cy="15" r="1.2" fill="#101848"/><circle cx="271" cy="15" r="1.2" fill="#101848"/><circle cx="275" cy="15" r="1.2" fill="#101848"/>
<rect x="295" y="6" width="14" height="8" fill="#7a28b8"/><rect x="297" y="16" width="13" height="8" fill="#7a28b8"/><path d="M289.5 10H295M291 20H297" stroke="#202020" stroke-width="1.3"/><rect x="301" y="8" width="6" height="4" fill="#fff"/><rect x="300" y="18.5" width="8" height="3" fill="#fff"/>
<path d="M319 8V16M315 13L319 17L323 13" stroke="#000" stroke-width="2" fill="none"/><rect x="314.5" y="19" width="9.5" height="2" fill="#000"/>
<path d="M337 6C343 6 347 8 347 12C347 15 343 16.5 339 16.5L336 19L337 16C334 15 333 13.5 333 12C333 8 335 6 337 6Z" fill="#f0f0f0" stroke="#303030" stroke-width="1.2"/>
<rect x="338" y="16" width="14" height="9" fill="#303030"/><path d="M333 22H338" stroke="#202020" stroke-width="1.3"/><circle cx="337" cy="11.5" r="0.9" fill="#000"/><circle cx="340" cy="11.5" r="0.9" fill="#000"/><circle cx="343" cy="11.5" r="0.9" fill="#000"/>
<path d="M361 8V16M357 13L361 17L365 13" stroke="#000" stroke-width="2" fill="none"/><rect x="356.5" y="19" width="9.5" height="2" fill="#000"/>
<path d="M378 6V13M378 9.5H382M382 6L380 9.5L382 13M387 6L385 9.5L387 13M391 6V13M387 9.5H391" stroke="#2060e0" stroke-width="1.8" fill="none"/>
<rect x="381" y="15" width="15" height="9" fill="#7a28b8"/><path d="M377 19.5H381" stroke="#202020" stroke-width="1.3"/><rect x="384" y="18" width="10" height="3" fill="#fff"/>
<path d="M408 8V16M404 13L408 17L412 13" stroke="#000" stroke-width="2" fill="none"/><rect x="403.5" y="19" width="9.5" height="2" fill="#000"/>
<rect x="419.5" y="4.5" width="26" height="26" rx="2" fill="#f4f6ff" stroke="#5a78e0"/>
<path d="M426 10V24M426 17H442M429 12H442" stroke="#101848" stroke-width="1.6"/>
</svg>

<!-- details view -->
<div class="a" style="left:30px;top:552px;width:432px;height:3px;background:#1e2230"></div>
<div class="a" style="left:30px;top:555px;width:432px;height:27px;background:linear-gradient(#efefef,#dedede)"></div>
<div class="t" style="left:62px;top:561.5px;font-size:16.5px;letter-spacing:0.9px;-webkit-text-stroke:0.55px #000;color:#10101a">Details view</div>
<div class="a" style="left:30px;top:582px;width:432px;height:32px;background:#c8c8c8"></div>
<div class="a" style="left:30px;top:614px;width:432px;height:105px;background:#ececec"></div>
<div class="a" style="left:38px;top:587px;width:102px;height:27px;background:linear-gradient(#f8f8f8,#ebebeb);border:1px solid #7a7a7a;border-bottom:none;border-radius:2px 2px 0 0"></div>
<div class="t" style="left:53px;top:592px;font-size:16px;letter-spacing:0.9px;-webkit-text-stroke:0.55px #000;color:#10101a">Module</div>
<svg class="a" style="left:35px;top:563px" width="15" height="11"><path d="M2 2.5L7.5 8L13 2.5" stroke="#000" stroke-width="2.6" fill="none"/></svg>
<div class="a" style="left:55px;top:556px;width:1px;height:26px;background:#a8a8a8"></div>
<div class="a" style="left:56px;top:556px;width:1px;height:26px;background:#fafafa"></div>
<div class="a" style="left:30px;top:581px;width:432px;height:1px;background:#a0a0a0"></div>
<div class="a" style="left:30px;top:613px;width:8px;height:1px;background:#8a8a8a"></div>
<div class="a" style="left:140px;top:613px;width:322px;height:1px;background:#8a8a8a"></div>
<!-- header row -->
<div class="a" style="left:30px;top:647px;width:432px;height:24px;background:linear-gradient(#f6f6f6,#e6e6e6 50%,#dedede);border-top:1px solid #cacaca;border-bottom:1px solid #cacaca"></div>
<div class="a" style="left:53px;top:648px;width:1px;height:22px;background:#c4c4c4"></div>
<div class="a" style="left:253px;top:648px;width:1px;height:22px;background:#c4c4c4"></div>
<div class="t" style="left:58px;top:653px;letter-spacing:0.4px">Name</div>
<!-- rows -->
<div class="a" style="left:30px;top:671px;width:432px;height:24px;background:#f0f0f0;border-bottom:1px solid #fafafa"></div>
<div class="a" style="left:30px;top:671px;width:24px;height:24px;background:#dfe2e8"></div>
<div class="a" style="left:54px;top:672.5px;width:200px;height:22px;background:#d6dbe2;border:1px dashed #8a8a8a"></div>
<svg class="a" style="left:31px;top:673px" width="20" height="20"><use href="#i-devcfg"/></svg>
<div class="t" style="left:60px;top:676.6px;letter-spacing:0.75px">Device configuration</div>
<div class="a" style="left:30px;top:695px;width:432px;height:24px;background:#f0f0f0"></div>
<svg class="a" style="left:31px;top:697px" width="20" height="20"><use href="#i-diag"/></svg>
<div class="t" style="left:60px;top:700.2px;letter-spacing:0.65px">Online &amp; diagnostics</div>


<!-- context menu -->
<div class="a" style="left:298px;top:274px;width:290px;height:460px;background:#fff;border:1px solid #8c8c8c"></div>
<div class="t" style="left:330px;top:281.4px;color:#000;letter-spacing:0.9px">Open</div>
<div class="t" style="left:330px;top:303.3px;color:#000;letter-spacing:0.74px">Open in new editor</div>
<div class="t" style="left:330px;top:325.7px;color:#000;letter-spacing:0.36px">Open block/PLC data type...</div>
<div class="t" style="right:333.5px;top:325.7px;color:#000;letter-spacing:0.2px">F7</div>
<div class="a" style="left:302px;top:349.5px;width:283px;height:1px;background:#d4d4d4"></div>
<svg class="a" style="left:304px;top:354.3px" width="19" height="19" viewBox="0 0 20 20"><use href="#m-cut"/></svg>
<div class="t" style="left:330px;top:357.5px;color:#a4a8b4;letter-spacing:0.3px">Cut</div>
<div class="t" style="right:333.5px;top:357.5px;color:#a4a8b4;letter-spacing:0.2px">Ctrl+X</div>
<svg class="a" style="left:304px;top:376.7px" width="19" height="19" viewBox="0 0 20 20"><use href="#m-copy"/></svg>
<div class="t" style="left:330px;top:379.9px;color:#000;letter-spacing:0.11px">Copy</div>
<div class="t" style="right:333.5px;top:379.9px;color:#000;letter-spacing:0.2px">Ctrl+C</div>
<svg class="a" style="left:304px;top:398.8px" width="19" height="19" viewBox="0 0 20 20"><use href="#m-paste"/></svg>
<div class="t" style="left:330px;top:402.0px;color:#a4a8b4;letter-spacing:0.4px">Paste</div>
<div class="t" style="right:333.5px;top:402.0px;color:#a4a8b4;letter-spacing:0.2px">Ctrl+V</div>
<div class="a" style="left:302px;top:425.0px;width:283px;height:1px;background:#d4d4d4"></div>
<svg class="a" style="left:304px;top:431.2px" width="19" height="19" viewBox="0 0 20 20"><use href="#m-topo"/></svg>
<div class="t" style="left:330px;top:434.4px;color:#000;letter-spacing:0.56px">Go to topology view</div>
<svg class="a" style="left:304px;top:453.4px" width="19" height="19" viewBox="0 0 20 20"><use href="#i-net"/></svg>
<div class="t" style="left:330px;top:456.6px;color:#000;letter-spacing:0.57px">Go to network view</div>
<div class="a" style="left:302px;top:480.0px;width:283px;height:1px;background:#d4d4d4"></div>
<div class="t" style="left:330px;top:487.7px;color:#000;letter-spacing:0.64px">Compile</div>
<svg class="a" style="left:572px;top:490.0px" width="6" height="10"><path d="M0 0L5 5L0 10Z" fill="#000"/></svg>
<div class="a" style="left:325px;top:507.5px;width:257px;height:20px;background:#3464d4"></div>
<div class="t" style="left:330px;top:510.0px;color:#fff;letter-spacing:0.68px">Download to device</div>
<svg class="a" style="left:572px;top:512.3px" width="6" height="10"><path d="M0 0L5 5L0 10Z" fill="#fff"/></svg>
<svg class="a" style="left:304px;top:529.0px" width="19" height="19" viewBox="0 0 20 20"><use href="#m-upload"/></svg>
<div class="t" style="left:330px;top:532.2px;color:#000;letter-spacing:0.71px">Upload from device (software)</div>
<div class="t" style="left:330px;top:554.5px;color:#000;letter-spacing:0.61px">Backup from online device</div>
<svg class="a" style="left:304px;top:573.6px" width="19" height="19" viewBox="0 0 20 20"><use href="#m-goonline"/></svg>
<div class="t" style="left:330px;top:576.8px;color:#a4a8b4;letter-spacing:0.23px">Go online</div>
<div class="t" style="right:333.5px;top:576.8px;color:#a4a8b4;letter-spacing:0.2px">Ctrl+K</div>
<svg class="a" style="left:304px;top:595.9px" width="19" height="19" viewBox="0 0 20 20"><use href="#m-gooffline"/></svg>
<div class="t" style="left:330px;top:599.1px;color:#000;letter-spacing:0.24px">Go offline</div>
<div class="t" style="right:333.5px;top:599.1px;color:#000;letter-spacing:0.2px">Ctrl+M</div>
<svg class="a" style="left:304px;top:618.5px" width="19" height="19" viewBox="0 0 20 20"><use href="#i-diag"/></svg>
<div class="t" style="left:330px;top:621.7px;color:#000;letter-spacing:0.6px">Online &amp; diagnostics</div>
<div class="t" style="right:333.5px;top:621.7px;color:#000;letter-spacing:0.2px">Ctrl+D</div>
<div class="a" style="left:302px;top:645.5px;width:283px;height:1px;background:#d4d4d4"></div>
<svg class="a" style="left:304px;top:650.3px" width="19" height="19" viewBox="0 0 20 20"><use href="#m-snap"/></svg>
<div class="t" style="left:330px;top:653.5px;color:#000;letter-spacing:0.58px">Snapshot of the actual values</div>
<svg class="a" style="left:304px;top:672.7px" width="19" height="19" viewBox="0 0 20 20"><use href="#m-loadsnap"/></svg>
<div class="t" style="left:330px;top:675.9px;color:#000;letter-spacing:0.65px">Load snapshots as actual values</div>
<svg class="a" style="left:304px;top:695.1px" width="19" height="19" viewBox="0 0 20 20"><use href="#m-loadstart"/></svg>
<div class="t" style="left:330px;top:698.3px;color:#000;letter-spacing:0.61px">Load start values as actual values</div>


<!-- badge 1 + orange box -->
<div class="a" style="left:70px;top:255px;width:238px;height:30px;border:3px solid #f0941e"></div>
<div class="a" style="left:40px;top:255px;width:30px;height:30px;border-radius:50%;background:#f39a22"></div>
<svg class="a" style="left:40px;top:255px" width="30" height="30"><path d="M21 7.5V23.5" stroke="#000" stroke-width="2.6"/><path d="M21.5 7L15 11.5" stroke="#000" stroke-width="2.3"/></svg>

<!-- badge 2 + orange box -->
<div class="a" style="left:321px;top:502px;width:264px;height:30px;border:3px solid #f0941e"></div>
<div class="a" style="left:290px;top:502px;width:30px;height:30px;border-radius:50%;background:#f39a22"></div>
<div class="t" style="left:299px;top:506px;font-size:22px;letter-spacing:0;color:#000">2</div>

<!-- submenu -->
<div class="a" style="left:586px;top:502px;width:221px;height:53px;background:#fff;border:1px solid #8c8c8c"></div>
<div class="a" style="left:613px;top:507.5px;width:189px;height:21px;background:#3464d4"></div>
<div class="t" style="left:617px;top:509.8px;color:#fff;letter-spacing:0.6px">Software (only changes)</div>
<div class="t" style="left:617px;top:532.7px;letter-spacing:0.59px">Software (all)</div>
<div class="a" style="left:611px;top:502px;width:196px;height:30px;border:3px solid #f0941e"></div>
<div class="a" style="left:580px;top:502px;width:30px;height:30px;border-radius:50%;background:#f39a22"></div>
<div class="t" style="left:589px;top:506px;font-size:22px;letter-spacing:0;color:#000">3</div>


</body></html>
